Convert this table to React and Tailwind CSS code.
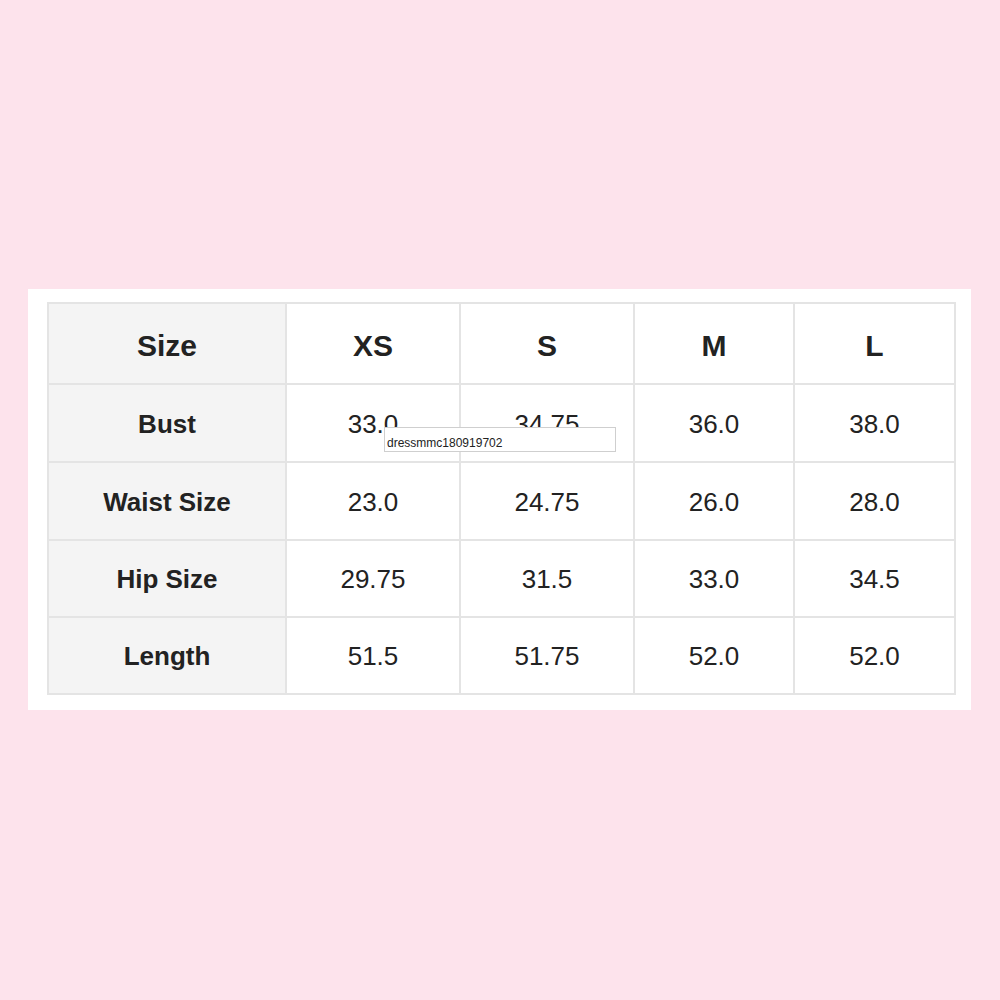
export default function App() {
  const font = { fontFamily: '"Liberation Sans", Arial, sans-serif' };
  const cols = ["XS", "S", "M", "L"];
  const rows = [
    ["Bust", "33.0", "34.75", "36.0", "38.0"],
    ["Waist Size", "23.0", "24.75", "26.0", "28.0"],
    ["Hip Size", "29.75", "31.5", "33.0", "34.5"],
    ["Length", "51.5", "51.75", "52.0", "52.0"],
  ];
  const heights = ["h-[78px]", "h-[78px]", "h-[77px]", "h-[77px]"];
  return (
    <div className="w-[1000px] h-[1000px] bg-[#fde3ec] pt-[289px] pl-[28px] relative" style={font}>
      <div className="w-[943px] h-[421px] bg-white pt-[13px] pl-[19px]">
        <div className="w-[909px] border-l-2 border-t-2 border-[#e4e4e4] grid grid-cols-[238px_174px_174px_160px_161px] text-[#222]">
          <div className="h-[81px] pt-[4px] bg-[#f4f4f4] border-r-2 border-b-2 border-[#e4e4e4] flex items-center justify-center text-[30px] font-bold">Size</div>
          {cols.map((c) => (
            <div key={c} className="h-[81px] pt-[4px] border-r-2 border-b-2 border-[#e4e4e4] flex items-center justify-center text-[30px] font-bold">{c}</div>
          ))}
          {rows.map((r, i) => (
            <>
              <div key={r[0]} className={`${heights[i]} pt-[2px] bg-[#f4f4f4] border-r-2 border-b-2 border-[#e4e4e4] flex items-center justify-center text-[26px] font-bold`}>{r[0]}</div>
              {r.slice(1).map((v, j) => (
                <div key={r[0] + j} className={`${heights[i]} pt-[2px] border-r-2 border-b-2 border-[#e4e4e4] flex items-center justify-center text-[26px]`}>{v}</div>
              ))}
            </>
          ))}
        </div>
      </div>
      <div className="absolute left-[384px] top-[427px] w-[232px] h-[25px] bg-white border border-[#cfcfcf] pl-[2px] pt-[6px] flex items-center text-[12px] text-[#222] leading-none">
        dressmmc180919702
      </div>
    </div>
  );
}
